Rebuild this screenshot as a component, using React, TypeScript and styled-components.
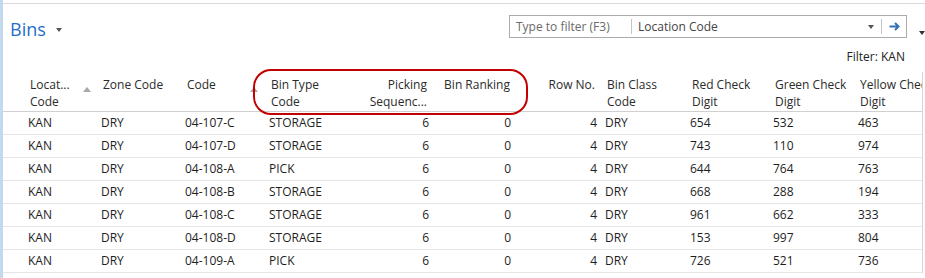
import React from 'react';
import styled, { createGlobalStyle } from 'styled-components';

const GlobalStyle = createGlobalStyle`
  html, body {
    margin: 0;
    padding: 0;
    background: #fff;
  }
  body {
    font-family: "Open Sans", "Noto Sans", Arial, sans-serif;
    font-size: 12px;
    color: #1e1e1e;
  }
`;

const COLS = '20px 73px 84px 84px 86px 84px 82px 84px 85px 83px 85px 120px';

const Page = styled.div`
  position: relative;
  display: flex;
  width: 925px;
  height: 278px;
  overflow: hidden;
`;

const SideBar = styled.div`
  flex: none;
  width: 3px;
  background: #c4d8ee;
`;

const Main = styled.div`
  flex: 1;
  min-width: 0;
  padding-top: 3px;
`;

const Content = styled.div`
  border-top: 1px solid #dadada;
`;

const TitleBar = styled.div`
  display: flex;
  align-items: flex-start;
  height: 40px;
`;

const Title = styled.h1`
  margin: 13px 0 0 7px;
  font-size: 18px;
  line-height: 24px;
  font-weight: 400;
  color: #1f6fc8;
`;

const Caret = styled.span<{ $color?: string }>`
  width: 0;
  height: 0;
  border-left: 3px solid transparent;
  border-right: 3px solid transparent;
  border-top: 4px solid ${(p) => p.$color || '#555'};
`;

const TitleCaret = styled(Caret)`
  margin: 24px 0 0 10px;
`;

const FilterBox = styled.div`
  display: flex;
  align-items: center;
  box-sizing: border-box;
  width: 398px;
  height: 23px;
  margin: 11px 0 0 auto;
  border: 1px solid #ababab;
`;

const FilterInput = styled.div`
  width: 115px;
  padding-left: 6px;
  color: #6a6a6a;
  white-space: nowrap;
`;

const Divider = styled.span`
  flex: none;
  width: 1px;
  height: 15px;
  background: #c4c4c4;
`;

const FieldSelect = styled.div`
  flex: 1;
  display: flex;
  align-items: center;
  padding: 0 7px 0 6px;
  color: #444;
`;

const FieldCaret = styled(Caret)`
  margin-left: auto;
`;

const GoButton = styled.div`
  display: flex;
  align-items: center;
  justify-content: center;
  width: 24px;
`;

const MoreCaret = styled(Caret)`
  margin: 27px 0 0 12px;
  border-top-color: #333;
`;

const FilterCaption = styled.div`
  height: 23px;
  padding: 5px 20px 0 0;
  line-height: 15px;
  text-align: right;
  color: #222;
`;

const Table = styled.div`
  width: 919px;
  border-right: 1px solid #d6d6d6;
  overflow: hidden;
`;

const HeaderRow = styled.div`
  display: grid;
  grid-template-columns: ${COLS};
  height: 39px;
  border-bottom: 1px solid #d0d0d0;
`;

const HeaderCell = styled.div<{ $right?: boolean; $pr: number }>`
  display: flex;
  align-items: flex-start;
  justify-content: ${(p) => (p.$right ? 'flex-end' : 'flex-start')};
  padding: 5px ${(p) => p.$pr}px 0 7px;
  line-height: 16.5px;
  color: #2b2b2b;
  white-space: nowrap;
  text-align: ${(p) => (p.$right ? 'right' : 'left')};
`;

const SortMark = styled.span`
  margin: 10px 0 0 auto;
  width: 0;
  height: 0;
  border-left: 4px solid transparent;
  border-right: 4px solid transparent;
  border-bottom: 5px solid #a8a8a8;
`;

const DataRow = styled.div`
  display: grid;
  grid-template-columns: ${COLS};
  height: 22px;
  border-bottom: 1px solid #e6e6e6;
`;

const Cell = styled.div<{ $right?: boolean; $pr: number }>`
  padding: 0 ${(p) => p.$pr}px 0 5px;
  line-height: 22px;
  text-align: ${(p) => (p.$right ? 'right' : 'left')};
  white-space: nowrap;
`;

const Highlight = styled.div`
  position: absolute;
  left: 253px;
  top: 69px;
  width: 275px;
  height: 46px;
  box-sizing: border-box;
  border: 2px solid #c20000;
  border-radius: 18px;
  pointer-events: none;
`;

type Col = { lines: string[]; right?: boolean; sorted?: boolean; pr: number; hpr: number };

const columns: Col[] = [
  { lines: ['Locat...', 'Code'], sorted: true, pr: 5, hpr: 5 },
  { lines: ['Zone Code'], pr: 5, hpr: 5 },
  { lines: ['Code'], sorted: true, pr: 5, hpr: 6 },
  { lines: ['Bin Type', 'Code'], pr: 5, hpr: 5 },
  { lines: ['Picking', 'Sequenc...'], right: true, pr: 5, hpr: 7 },
  { lines: ['Bin Ranking'], right: true, pr: 5, hpr: 6 },
  { lines: ['Row No.'], right: true, pr: 3, hpr: 5 },
  { lines: ['Bin Class', 'Code'], pr: 5, hpr: 5 },
  { lines: ['Red Check', 'Digit'], pr: 5, hpr: 5 },
  { lines: ['Green Check', 'Digit'], pr: 5, hpr: 5 },
  { lines: ['Yellow Check', 'Digit'], pr: 5, hpr: 5 },
];

const rows = [
  ['KAN', 'DRY', '04-107-C', 'STORAGE', '6', '0', '4', 'DRY', '654', '532', '463'],
  ['KAN', 'DRY', '04-107-D', 'STORAGE', '6', '0', '4', 'DRY', '743', '110', '974'],
  ['KAN', 'DRY', '04-108-A', 'PICK', '6', '0', '4', 'DRY', '644', '764', '763'],
  ['KAN', 'DRY', '04-108-B', 'STORAGE', '6', '0', '4', 'DRY', '668', '288', '194'],
  ['KAN', 'DRY', '04-108-C', 'STORAGE', '6', '0', '4', 'DRY', '961', '662', '333'],
  ['KAN', 'DRY', '04-108-D', 'STORAGE', '6', '0', '4', 'DRY', '153', '997', '804'],
  ['KAN', 'DRY', '04-109-A', 'PICK', '6', '0', '4', 'DRY', '726', '521', '736'],
];

const ArrowIcon = () => (
  <svg width="11" height="9" viewBox="0 0 11 9">
    <path d="M0.5 4.5H9M6 1L9.5 4.5L6 8" fill="none" stroke="#2f74b7" strokeWidth="2" />
  </svg>
);

const App = () => {
  return (
    <>
      <GlobalStyle />
      <Page>
        <SideBar />
        <Main>
          <Content>
            <TitleBar>
              <Title>Bins</Title>
              <TitleCaret />
              <FilterBox>
                <FilterInput>Type to filter (F3)</FilterInput>
                <Divider />
                <FieldSelect>
                  Location Code
                  <FieldCaret />
                </FieldSelect>
                <Divider />
                <GoButton>
                  <ArrowIcon />
                </GoButton>
              </FilterBox>
              <MoreCaret />
            </TitleBar>
            <FilterCaption>Filter: KAN</FilterCaption>
            <Table>
              <HeaderRow>
                <div />
                {columns.map((c, i) => (
                  <HeaderCell key={i} $right={c.right} $pr={c.hpr}>
                    <span>
                      {c.lines.map((l, j) => (
                        <div key={j}>{l}</div>
                      ))}
                    </span>
                    {c.sorted && <SortMark />}
                  </HeaderCell>
                ))}
              </HeaderRow>
              {rows.map((r, i) => (
                <DataRow key={i}>
                  <div />
                  {r.map((v, j) => (
                    <Cell key={j} $right={columns[j].right} $pr={columns[j].pr}>
                      {v}
                    </Cell>
                  ))}
                </DataRow>
              ))}
            </Table>
          </Content>
        </Main>
        <Highlight />
      </Page>
    </>
  );
};

export default App;
